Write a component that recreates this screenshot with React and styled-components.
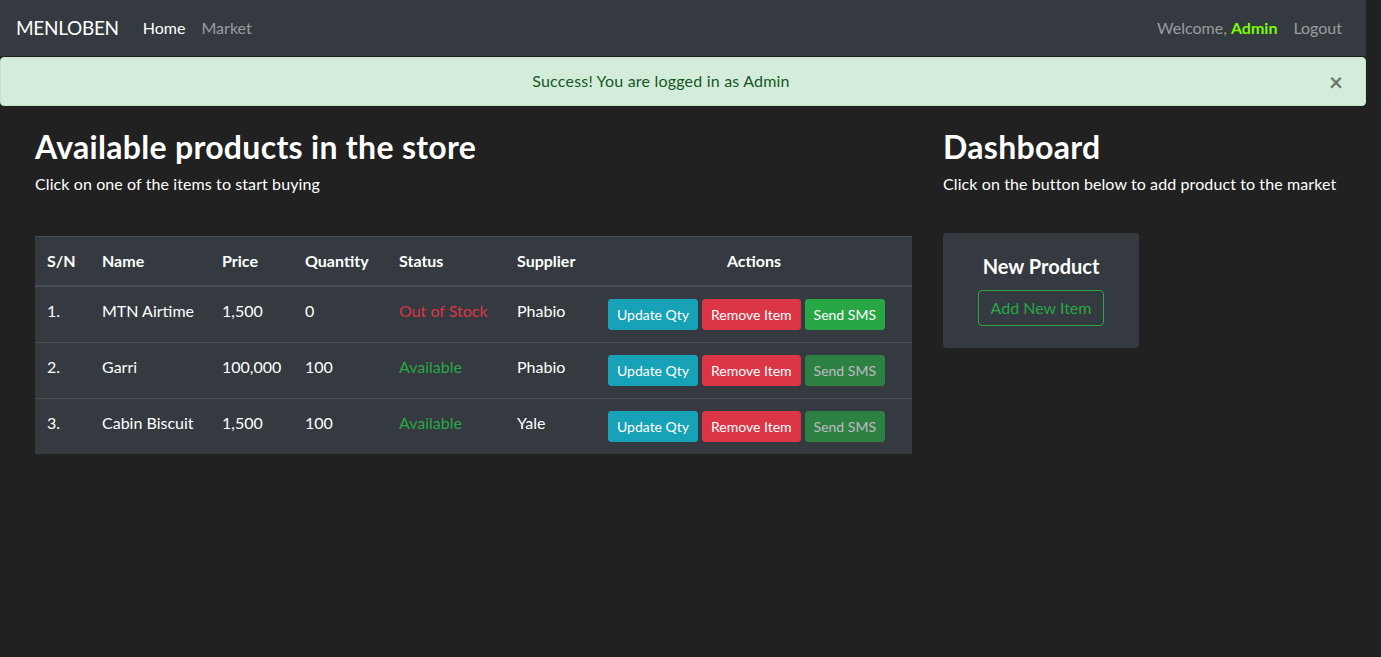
import React from 'react'
import styled, { createGlobalStyle } from 'styled-components'

const GlobalStyle = createGlobalStyle`
  * { box-sizing: border-box; }
  body {
    margin: 0;
    background: #212121;
    font-family: Lato, "Open Sans", sans-serif;
    font-size: 16px;
    line-height: 1.5;
    color: #ffffff;
  }
`;

const products = [
  { sn: '1.', name: 'MTN Airtime', price: '1,500', qty: '0', status: 'Out of Stock', supplier: 'Phabio', smsOff: false },
  { sn: '2.', name: 'Garri', price: '100,000', qty: '100', status: 'Available', supplier: 'Phabio', smsOff: true },
  { sn: '3.', name: 'Cabin Biscuit', price: '1,500', qty: '100', status: 'Available', supplier: 'Yale', smsOff: true },
]

const columns = [
  { label: 'S/N', width: 55 },
  { label: 'Name', width: 120 },
  { label: 'Price', width: 83 },
  { label: 'Quantity', width: 94 },
  { label: 'Status', width: 118 },
  { label: 'Supplier', width: 91 },
  { label: 'Actions', width: 316, center: true },
]

const App = () => {
  return (
    <Page>
      <GlobalStyle />
      <Navbar>
        <NavLeft>
          <Brand>MENLOBEN</Brand>
          <NavLink active>Home</NavLink>
          <NavLink>Market</NavLink>
        </NavLeft>
        <NavRight>
          <Welcome>Welcome, <AdminName>Admin</AdminName></Welcome>
          <NavLink>Logout</NavLink>
        </NavRight>
      </Navbar>

      <Alert>
        Success! You are logged in as Admin
        <CloseButton>×</CloseButton>
      </Alert>

      <Main>
        <section>
          <Title>Available products in the store</Title>
          <Lead>Click on one of the items to start buying</Lead>
          <Table>
            <colgroup>
              {columns.map(c => <col key={c.label} style={{ width: c.width }} />)}
            </colgroup>
            <thead>
              <tr>
                {columns.map(c => <Th key={c.label} center={c.center}>{c.label}</Th>)}
              </tr>
            </thead>
            <tbody>
              {products.map(p => (
                <tr key={p.sn}>
                  <Td>{p.sn}</Td>
                  <Td>{p.name}</Td>
                  <Td>{p.price}</Td>
                  <Td>{p.qty}</Td>
                  <Td>
                    <Status out={p.status !== 'Available'}>{p.status}</Status>
                  </Td>
                  <Td>{p.supplier}</Td>
                  <Td>
                    <Actions>
                      <Btn variant="info">Update Qty</Btn>
                      <Btn variant="danger">Remove Item</Btn>
                      <Btn variant="success" disabled={p.smsOff}>Send SMS</Btn>
                    </Actions>
                  </Td>
                </tr>
              ))}
            </tbody>
          </Table>
        </section>

        <section>
          <Title>Dashboard</Title>
          <Lead>Click on the button below to add product to the market</Lead>
          <Card>
            <CardTitle>New Product</CardTitle>
            <OutlineBtn>Add New Item</OutlineBtn>
          </Card>
        </section>
      </Main>
    </Page>
  )
}

export default App

const Page = styled.div`
  width: 1366px;
  min-height: 657px;
`;

const Navbar = styled.nav`
  height: 56px;
  background: #343a40;
  padding: 8px 16px;
  display: flex;
  align-items: center;
  justify-content: space-between;
`;

const NavLeft = styled.div`
  display: flex;
  align-items: center;
`;

const NavRight = styled.div`
  display: flex;
  align-items: center;
`;

const Brand = styled.span`
  font-size: 19px;
  color: #ffffff;
  margin-right: 16px;
  letter-spacing: -0.3px;
`;

const NavLink = styled.span`
  padding: 8px;
  color: ${props => (props.active ? '#ffffff' : 'rgba(255,255,255,0.5)')};
`;

const Welcome = styled.span`
  color: rgba(255,255,255,0.5);
  margin-right: 8px;
`;

const AdminName = styled.b`
  color: #7cfc00;
  font-weight: 700;
`;

const Alert = styled.div`
  position: relative;
  margin-top: 1px;
  height: 49px;
  background: #d4edda;
  border: 1px solid #c3e6cb;
  border-radius: 4px;
  color: #155724;
  text-align: center;
  padding: 11px 64px 12px 20px;
  line-height: 24px;
  letter-spacing: 0.2px;
`;

const CloseButton = styled.span`
  position: absolute;
  top: 0;
  right: 0;
  padding: 12px 22px;
  font-size: 24px;
  font-weight: 700;
  line-height: 24px;
  color: #000000;
  opacity: 0.5;
`;

const Main = styled.main`
  display: grid;
  grid-template-columns: 877px 1fr;
  column-gap: 31px;
  padding: 22px 15px 0 35px;
`;

const Title = styled.h2`
  margin: 0 0 6px;
  font-size: 32px;
  font-weight: 700;
  line-height: 38px;
  letter-spacing: 0.3px;
`;

const Lead = styled.p`
  margin: 0;
  font-size: 16px;
  line-height: 24px;
  letter-spacing: 0.1px;
  white-space: nowrap;
`;

const Table = styled.table`
  margin-top: 40px;
  width: 877px;
  table-layout: fixed;
  border-collapse: collapse;
  background: #343a40;
  color: #ffffff;
`;

const Th = styled.th`
  text-align: ${props => (props.center ? 'center' : 'left')};
  font-weight: 700;
  padding: 12px;
  line-height: 24px;
  border-top: 1px solid #454d55;
  border-bottom: 2px solid #454d55;
  white-space: nowrap;
`;

const Td = styled.td`
  padding: 12px;
  line-height: 24px;
  vertical-align: top;
  border-top: 1px solid #454d55;
  white-space: nowrap;
`;

const Status = styled.span`
  color: ${props => (props.out ? '#dc3545' : '#28a745')};
`;

const Actions = styled.div`
  display: flex;
  gap: 4px;
`;

const btnColors = {
  info: '#17a2b8',
  danger: '#dc3545',
  success: '#28a745',
}

const Btn = styled.button`
  font-family: inherit;
  font-size: 14px;
  line-height: 21px;
  padding: 4px 8px;
  border: 1px solid ${props => btnColors[props.variant]};
  border-radius: 3px;
  background: ${props => btnColors[props.variant]};
  color: #ffffff;
  opacity: ${props => (props.disabled ? 0.65 : 1)};
`;

const Card = styled.div`
  margin-top: 37px;
  width: 196px;
  background: #343a40;
  border-radius: 4px;
  padding: 21px 0 22px;
  display: flex;
  flex-direction: column;
  align-items: center;
`;

const CardTitle = styled.h5`
  margin: 0 0 12px;
  font-size: 20px;
  font-weight: 700;
  line-height: 24px;
`;

const OutlineBtn = styled.button`
  font-family: inherit;
  font-size: 16px;
  line-height: 24px;
  padding: 5px 12px;
  background: transparent;
  border: 1px solid #28a745;
  border-radius: 4px;
  color: #28a745;
`;
